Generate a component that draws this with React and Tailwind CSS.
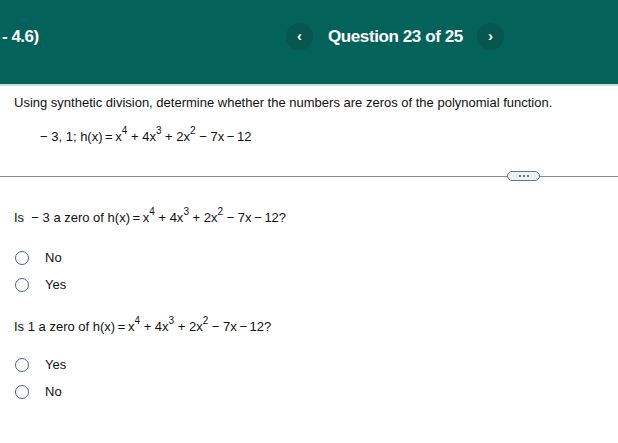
import React from 'react';

const Sup = ({ children }) => (
  <sup className="text-[10px] relative -top-[7px]">{children}</sup>
);

const Poly = () => (
  <span>
    h(x)&#8201;=&#8201;x<Sup>4</Sup> + 4x<Sup>3</Sup> + 2x<Sup>2</Sup> − 7x&#8201;−&#8201;12
  </span>
);

const Radio = ({ label }) => (
  <label className="flex items-center gap-[16px] h-[27px]">
    <span className="ml-[15px] w-[14px] h-[14px] rounded-full border-[1.5px] border-[#3f5fa8] bg-white" />
    <span>{label}</span>
  </label>
);

export default function App() {
  return (
    <div className="w-[618px] h-[443px] bg-white text-[#111] text-[13px]" style={{ fontFamily: '"Liberation Sans", Arial, sans-serif' }}>
      {/* header */}
      <div className="h-[86px] bg-[#03635a] border-b-[2px] border-[#c9dde0] relative">
        <div className="absolute left-[2px] top-[23px] text-white font-bold text-[17px] leading-[27px] tracking-[-0.5px]">- 4.6)</div>
        <div className="absolute left-[286px] top-[23px] flex items-center">
          <button className="w-[27px] h-[27px] rounded-full bg-[#07564f] text-white text-[15px] font-bold flex items-center justify-center">‹</button>
          <span className="ml-[15px] mr-[14px] text-white font-bold text-[17px] tracking-[-0.4px]">Question 23 of 25</span>
          <button className="w-[27px] h-[27px] rounded-full bg-[#07564f] text-white text-[15px] font-bold flex items-center justify-center">›</button>
        </div>
      </div>

      <div className="pl-[14px] pt-[8px]">
        <p className="leading-[18px]">Using synthetic division, determine whether the numbers are zeros of the polynomial function.</p>
        <p className="pl-[26px] mt-[16px] leading-[18px]">− 3, 1; <Poly /></p>
      </div>

      {/* divider */}
      <div className="mt-[25px] flex items-center">
        <div className="flex-1 h-px bg-[#8a8a8a]" />
        <div className="w-[33px] h-[10px] rounded-full border border-[#6c7278] bg-[#eef1f5] flex items-center justify-center gap-[2px]">
          <span className="w-[2px] h-[2px] bg-[#444] rounded-full" />
          <span className="w-[2px] h-[2px] bg-[#444] rounded-full" />
          <span className="w-[2px] h-[2px] bg-[#444] rounded-full" />
        </div>
        <div className="w-[78px] h-px bg-[#8a8a8a]" />
      </div>

      <div className="pl-[14px] pt-[28px]">
        <p className="leading-[18px]">Is &nbsp;− 3 a zero of <Poly />?</p>
      </div>
      <div className="mt-[17px]">
        <Radio label="No" />
        <Radio label="Yes" />
      </div>

      <div className="pl-[14px] pt-[20px]">
        <p className="leading-[18px]">Is 1 a zero of <Poly />?</p>
      </div>
      <div className="mt-[15px]">
        <Radio label="Yes" />
        <Radio label="No" />
      </div>
    </div>
  );
}
